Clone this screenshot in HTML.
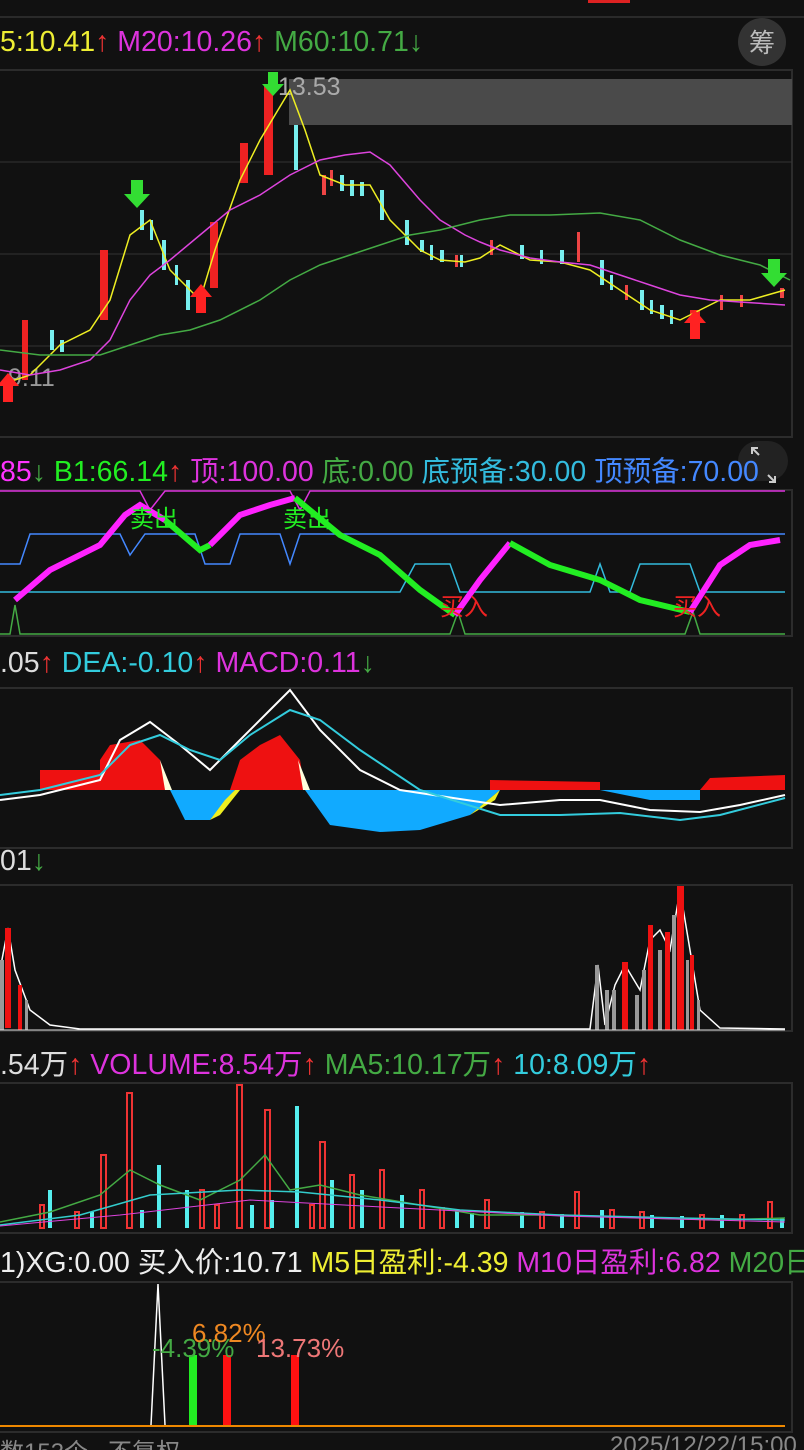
<!DOCTYPE html>
<html><head><meta charset="utf-8"><style>
html,body{margin:0;padding:0;background:#111;width:804px;height:1450px;overflow:hidden}
body{font-family:"Liberation Sans","Noto Sans CJK SC",sans-serif;position:relative}
.h{position:absolute;left:0;font-size:28.5px;white-space:nowrap;letter-spacing:0}
svg{position:absolute;left:0;top:0}
</style></head><body>
<svg width="804" height="1450" viewBox="0 0 804 1450">
<rect x="588" y="0" width="42" height="3" fill="#d22"/>
<line x1="0" y1="17" x2="804" y2="17" stroke="#2a2a2a" stroke-width="2"/>
<rect x="-1" y="70" width="793" height="367" fill="none" stroke="#2c2c2c" stroke-width="2"/>
<line x1="0" y1="162" x2="792" y2="162" stroke="#333"/>
<line x1="0" y1="254" x2="792" y2="254" stroke="#333"/>
<line x1="0" y1="346" x2="792" y2="346" stroke="#333"/>
<rect x="289" y="79" width="503" height="46" fill="#4a4a4a"/>
<circle cx="762" cy="42" r="24" fill="#333"/>
<text x="762" y="52" font-size="26" fill="#bbb" text-anchor="middle" font-family="Noto Sans CJK SC">筹</text>
<text x="278" y="95" font-size="25" fill="#aaa">13.53</text>
<text x="8" y="386" font-size="25" fill="#999">9.11</text>
<g>
<rect x="22" y="320" width="6" height="60" fill="#e22"/>
<rect x="100" y="250" width="8" height="70" fill="#e22"/>
<rect x="210" y="222" width="8" height="66" fill="#e22"/>
<rect x="240" y="143" width="8" height="40" fill="#e22"/>
<rect x="264" y="85" width="9" height="90" fill="#e22"/>
<rect x="294" y="125" width="4" height="45" fill="#7ee"/>
<rect x="162" y="240" width="4" height="30" fill="#7ee"/>
<rect x="186" y="280" width="4" height="30" fill="#7ee"/>
<rect x="322" y="175" width="4" height="20" fill="#e44"/>
<rect x="380" y="190" width="4" height="30" fill="#7ee"/>
<rect x="405" y="220" width="4" height="25" fill="#7ee"/>
<rect x="577" y="232" width="3" height="30" fill="#e44"/>
<rect x="690" y="310" width="10" height="28" fill="#e22"/>
</g>
<g fill="#7ee"><rect x="340" y="175" width="4" height="16"/><rect x="350" y="180" width="4" height="16"/><rect x="360" y="182" width="4" height="14"/><rect x="420" y="240" width="4" height="12"/><rect x="440" y="250" width="4" height="12"/><rect x="520" y="245" width="4" height="14"/><rect x="560" y="250" width="4" height="14"/><rect x="600" y="260" width="4" height="25"/><rect x="640" y="290" width="4" height="20"/><rect x="660" y="305" width="4" height="14"/><rect x="50" y="330" width="4" height="20"/><rect x="60" y="340" width="4" height="12"/><rect x="140" y="210" width="4" height="20"/><rect x="150" y="220" width="3" height="20"/><rect x="175" y="265" width="3" height="20"/><rect x="430" y="245" width="3" height="15"/><rect x="460" y="255" width="3" height="12"/><rect x="540" y="250" width="3" height="14"/><rect x="610" y="275" width="3" height="15"/><rect x="650" y="300" width="3" height="14"/><rect x="670" y="310" width="3" height="14"/></g>
<g fill="#e44"><rect x="330" y="170" width="3" height="16"/><rect x="455" y="255" width="3" height="12"/><rect x="490" y="240" width="3" height="15"/><rect x="625" y="285" width="3" height="15"/><rect x="720" y="295" width="3" height="15"/><rect x="740" y="295" width="3" height="12"/><rect x="780" y="288" width="4" height="10"/></g>
<polyline fill="none" stroke="#ee2" stroke-width="1.5" points="0,385 30,375 60,345 90,330 110,300 130,235 150,220 170,270 200,300 215,250 240,180 260,140 290,90 305,130 320,175 345,185 370,185 390,220 420,250 440,260 465,262 480,258 500,245 530,260 560,262 590,270 620,290 650,310 680,320 700,310 720,300 750,300 785,290"/>
<polyline fill="none" stroke="#d4d" stroke-width="1.5" points="0,370 30,375 60,370 90,360 110,340 130,300 150,275 170,260 200,235 230,210 260,195 290,175 320,160 345,155 370,152 390,165 420,200 440,220 465,235 480,242 500,250 530,258 560,262 590,265 620,275 650,285 680,295 710,300 740,302 785,305"/>
<polyline fill="none" stroke="#4a4" stroke-width="1.5" points="0,350 40,355 80,355 100,355 130,345 160,335 190,330 220,320 260,300 290,280 320,265 350,255 380,245 410,235 440,230 480,220 510,215 550,215 600,213 640,220 680,240 720,255 760,265 790,280"/>
<path d="M131,180h12v14h7l-13,14l-13,-14h7z" fill="#3d3"/>
<path d="M268,72h10v12h6l-11,12l-11,-12h6z" fill="#3d3"/>
<path d="M768,259h12v14h7l-13,14l-13,-14h7z" fill="#3d3"/>
<path d="M201,284l11,13h-6v16h-10v-16h-6z" fill="#f22"/>
<path d="M695,310l11,13h-6v16h-10v-16h-6z" fill="#f22"/>
<path d="M8,373l11,13h-6v16h-10v-16h-6z" fill="#f22"/>
<rect x="738" y="441" width="50" height="40" rx="20" fill="#222"/>
<path d="M752,454v-6h6M752,448l7,7M775,476v6h-6M775,482l-7,-7" stroke="#ccc" stroke-width="2" fill="none"/>
<rect x="-1" y="490" width="793" height="146" fill="none" stroke="#2c2c2c" stroke-width="2"/>
<polyline fill="none" stroke="#d3d" stroke-width="1.5" points="0,491 140,491 150,510 165,491 290,491 300,510 310,491 785,491"/>
<polyline fill="none" stroke="#48f" stroke-width="1.5" points="0,564 20,564 30,534 120,534 130,555 145,534 195,534 205,564 230,564 240,534 280,534 290,564 300,534 785,534"/>
<polyline fill="none" stroke="#3bd" stroke-width="1.5" points="0,592 400,592 415,564 450,564 460,592 590,592 600,564 610,592 630,592 640,564 690,564 700,592 785,592"/>
<polyline fill="none" stroke="#4a4" stroke-width="1.5" points="0,634 10,634 15,605 20,634 450,634 458,612 465,634 685,634 693,612 700,634 785,634"/>
<polyline fill="none" stroke="#f2f" stroke-width="6" points="15,600 50,570 100,545 125,515 140,505 165,520"/>
<polyline fill="none" stroke="#2e2" stroke-width="6" points="165,520 200,550 210,545"/>
<polyline fill="none" stroke="#f2f" stroke-width="6" points="210,545 240,515 270,505 295,498"/>
<polyline fill="none" stroke="#2e2" stroke-width="6" points="295,498 340,535 380,555 420,590 455,615"/>
<polyline fill="none" stroke="#f2f" stroke-width="6" points="455,615 480,580 510,543"/>
<polyline fill="none" stroke="#2e2" stroke-width="6" points="510,543 550,565 600,580 640,600 690,612"/>
<polyline fill="none" stroke="#f2f" stroke-width="6" points="690,612 720,565 750,545 780,540"/>
<text x="130" y="527" font-size="24" fill="#2e2" font-family="Noto Sans CJK SC">卖出</text>
<text x="283" y="527" font-size="24" fill="#2e2" font-family="Noto Sans CJK SC">卖出</text>
<text x="440" y="615" font-size="24" fill="#e22" font-family="Noto Sans CJK SC">买入</text>
<text x="673" y="615" font-size="24" fill="#e22" font-family="Noto Sans CJK SC">买入</text>
<rect x="-1" y="688" width="793" height="160" fill="none" stroke="#2c2c2c" stroke-width="2"/>
<path d="M0,790 L40,790 L40,770 L100,770 L100,760 L110,745 L140,740 L160,760 L170,790Z M230,790 L240,760 L260,745 L280,735 L300,760 L305,790Z M490,790 L490,780 L600,782 L600,790Z M700,790 L710,778 L785,775 L785,790Z" fill="#e11"/>
<path d="M170,790 L185,820 L210,820 L235,790Z M305,790 L330,825 L380,832 L420,830 L470,815 L500,790Z M600,790 L650,800 L700,800 L700,790Z" fill="#1af"/>
<path d="M160,760 L165,790 L172,790 Z M298,760 L303,790 L310,790Z" fill="#ffd"/>
<path d="M210,820 L225,800 L235,790 L240,790 L220,815Z M470,815 L500,790 L495,800Z" fill="#ee2"/>
<polyline fill="none" stroke="#fff" stroke-width="2" points="0,800 40,795 100,780 120,740 150,722 180,745 210,770 240,740 270,710 290,690 320,730 360,770 400,790 500,805 560,800 600,800 650,810 700,812 740,805 785,795"/>
<polyline fill="none" stroke="#3cd" stroke-width="2" points="0,795 40,790 100,775 130,745 160,735 190,750 220,760 250,735 290,710 320,720 360,750 420,790 500,815 560,815 620,813 680,820 720,815 785,798"/>
<rect x="-1" y="885" width="793" height="146" fill="none" stroke="#2c2c2c" stroke-width="2"/>
<polyline fill="none" stroke="#fff" stroke-width="1.5" points="0,970 8,928 15,970 30,1010 50,1025 80,1029 590,1029 598,965 605,1025 615,985 625,965 640,990 650,940 660,930 670,950 680,890 690,950 700,1010 720,1028 785,1029"/>
<g fill="#e11"><rect x="5" y="928" width="6" height="100"/><rect x="18" y="985" width="4" height="45"/><rect x="622" y="962" width="6" height="68"/><rect x="648" y="925" width="5" height="105"/><rect x="665" y="932" width="5" height="98"/><rect x="677" y="886" width="7" height="144"/><rect x="690" y="955" width="4" height="75"/></g>
<g fill="#999"><rect x="0" y="960" width="4" height="70"/><rect x="25" y="1000" width="3" height="30"/><rect x="595" y="965" width="4" height="65"/><rect x="605" y="990" width="4" height="40"/><rect x="612" y="990" width="4" height="40"/><rect x="635" y="995" width="4" height="35"/><rect x="642" y="970" width="4" height="60"/><rect x="658" y="950" width="4" height="80"/><rect x="672" y="915" width="4" height="115"/><rect x="686" y="960" width="3" height="70"/><rect x="697" y="1000" width="3" height="30"/></g>
<line x1="0" y1="1030" x2="785" y2="1030" stroke="#ddd"/>
<rect x="-1" y="1083" width="793" height="150" fill="none" stroke="#2c2c2c" stroke-width="2"/>
<g fill="none" stroke="#e33" stroke-width="2">
<rect x="101" y="1155" width="5" height="73"/><rect x="127" y="1093" width="5" height="135"/><rect x="237" y="1085" width="5" height="143"/><rect x="265" y="1110" width="5" height="118"/><rect x="320" y="1142" width="5" height="86"/><rect x="40" y="1205" width="4" height="23"/><rect x="200" y="1190" width="4" height="38"/><rect x="350" y="1175" width="4" height="53"/><rect x="380" y="1170" width="4" height="58"/><rect x="420" y="1190" width="4" height="38"/><rect x="485" y="1200" width="4" height="28"/><rect x="575" y="1192" width="4" height="36"/><rect x="768" y="1202" width="4" height="26"/><rect x="610" y="1210" width="4" height="18"/><rect x="700" y="1215" width="4" height="13"/><rect x="75" y="1212" width="4" height="16"/><rect x="215" y="1205" width="4" height="23"/><rect x="310" y="1205" width="4" height="23"/><rect x="440" y="1208" width="4" height="20"/><rect x="540" y="1212" width="4" height="16"/><rect x="640" y="1212" width="4" height="16"/><rect x="740" y="1215" width="4" height="13"/></g>
<g fill="#5ee"><rect x="48" y="1190" width="4" height="38"/><rect x="157" y="1165" width="4" height="63"/><rect x="185" y="1190" width="4" height="38"/><rect x="295" y="1106" width="4" height="122"/><rect x="330" y="1180" width="4" height="48"/><rect x="360" y="1190" width="4" height="38"/><rect x="400" y="1195" width="4" height="33"/><rect x="455" y="1210" width="4" height="18"/><rect x="520" y="1212" width="4" height="16"/><rect x="600" y="1210" width="4" height="18"/><rect x="650" y="1215" width="4" height="13"/><rect x="720" y="1215" width="4" height="13"/><rect x="780" y="1218" width="4" height="10"/><rect x="140" y="1210" width="4" height="18"/><rect x="270" y="1200" width="4" height="28"/><rect x="90" y="1212" width="4" height="16"/><rect x="250" y="1205" width="4" height="23"/><rect x="470" y="1213" width="4" height="15"/><rect x="560" y="1214" width="4" height="14"/><rect x="680" y="1216" width="4" height="12"/></g>
<polyline fill="none" stroke="#4a4" stroke-width="1.5" points="0,1222 50,1212 100,1195 130,1170 160,1185 200,1200 240,1180 265,1155 290,1190 320,1185 360,1195 420,1205 480,1215 560,1215 650,1218 720,1220 785,1218"/>
<polyline fill="none" stroke="#3cc" stroke-width="1.5" points="0,1225 80,1215 150,1195 240,1190 300,1192 380,1200 460,1210 560,1215 680,1218 785,1220"/>
<polyline fill="none" stroke="#d4d" stroke-width="1" points="0,1226 120,1215 250,1200 400,1208 560,1216 785,1222"/>
<rect x="-1" y="1282" width="793" height="150" fill="none" stroke="#2c2c2c" stroke-width="2"/>
<polyline fill="none" stroke="#fff" stroke-width="1.5" points="151,1425 158,1284 165,1425"/>
<rect x="189" y="1355" width="8" height="70" fill="#2e2"/>
<rect x="223" y="1355" width="8" height="70" fill="#f11"/>
<rect x="291" y="1355" width="8" height="70" fill="#f11"/>
<line x1="0" y1="1426" x2="785" y2="1426" stroke="#e80" stroke-width="2"/>
<text x="152" y="1357" font-size="26" fill="#4a4">-4.39%</text>
<text x="192" y="1342" font-size="26" fill="#e82">6.82%</text>
<text x="256" y="1357" font-size="26" fill="#e77">13.73%</text>
</svg>
<div class="h" style="top:26px"><span style="color:#ee3">5:10.41</span><span style="color:#e33">↑</span> <span style="color:#d3d">M20:10.26</span><span style="color:#e33">↑</span> <span style="color:#4a4">M60:10.71</span><span style="color:#4a4">↓</span></div>
<div class="h" style="top:449px"><span style="color:#f3f">85</span><span style="color:#4a4">↓</span> <span style="color:#2e2">B1:66.14</span><span style="color:#e33">↑</span> <span style="color:#d3d">顶:100.00</span> <span style="color:#4a4">底:0.00</span> <span style="color:#3bd">底预备:30.00</span> <span style="color:#48f">顶预备:70.00</span></div>
<div class="h" style="top:647px"><span style="color:#ddd">.05</span><span style="color:#e33">↑</span> <span style="color:#3cd">DEA:-0.10</span><span style="color:#e33">↑</span> <span style="color:#d3d">MACD:0.11</span><span style="color:#4a4">↓</span></div>
<div class="h" style="top:845px"><span style="color:#ddd">01</span><span style="color:#4a4">↓</span></div>
<div class="h" style="top:1042px"><span style="color:#ddd">.54万</span><span style="color:#e33">↑</span> <span style="color:#d3d">VOLUME:8.54万</span><span style="color:#e33">↑</span> <span style="color:#4a4">MA5:10.17万</span><span style="color:#e33">↑</span> <span style="color:#3cd">10:8.09万</span><span style="color:#e33">↑</span></div>
<div class="h" style="top:1240px"><span style="color:#eee">1)XG:0.00 买入价:10.71</span> <span style="color:#ee3">M5日盈利:-4.39</span> <span style="color:#d3d">M10日盈利:6.82</span> <span style="color:#4a4">M20日</span></div>
<div class="h" style="top:1432px;font-size:24px;color:#888">数153个 &nbsp; 不复权</div>
<div class="h" style="top:1432px;left:610px;font-size:24px;color:#888">2025/12/22/15:00</div>
</body></html>
